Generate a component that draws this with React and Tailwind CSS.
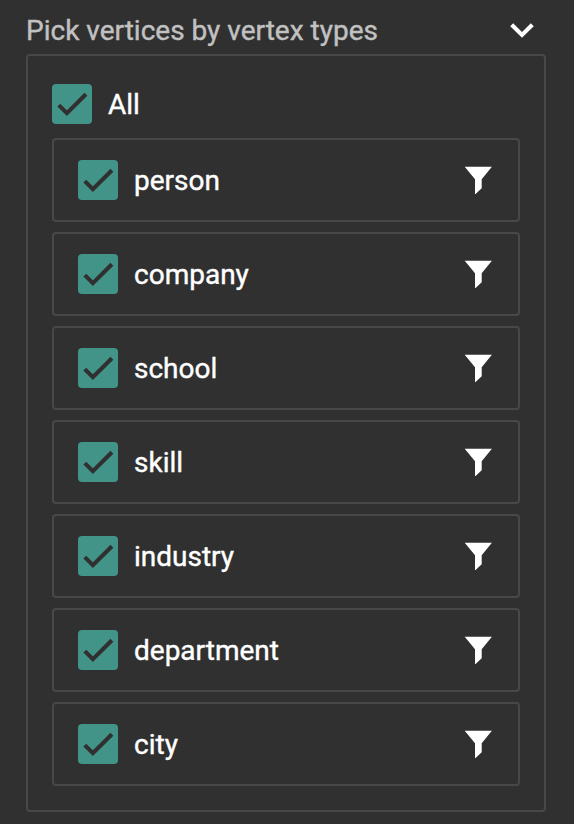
const vertexTypes = ['person', 'company', 'school', 'skill', 'industry', 'department', 'city'];

function Checkbox() {
  return (
    <span className="block size-10 shrink-0 rounded-[4px] bg-[#429488]">
      <svg viewBox="0 0 40 40" className="size-10" fill="none" stroke="#303030" strokeWidth="4.1">
        <path d="M6.8 21.1 14.9 29.1 33.9 10.2" />
      </svg>
    </span>
  );
}

function FunnelIcon() {
  return (
    <svg viewBox="0 0 28 28" className="size-7 shrink-0" fill="#ffffff">
      <path d="M0.7 0.8H27.9L17.7 13.2V22.3L11.6 28H11V13.2Z" />
    </svg>
  );
}

function ChevronIcon() {
  return (
    <svg viewBox="0 0 24 16" className="h-4 w-6 shrink-0" fill="none" stroke="#ffffff" strokeWidth="4.2">
      <path d="M1.7 2.8 12 12.9 22.3 2.8" />
    </svg>
  );
}

function VertexRow({ name }) {
  return (
    <li className="flex h-[84px] items-center rounded-[4px] border-2 border-[#484848] pr-[26px] pl-6">
      <Checkbox />
      <span className="ml-4 flex-1 pt-0.5">{name}</span>
      <FunnelIcon />
    </li>
  );
}

export default function App() {
  return (
    <main className="h-[824px] w-[574px] overflow-hidden bg-[#303030] px-[26px] font-['Roboto',sans-serif] text-[28px] leading-10 text-white [-webkit-text-stroke:0.4px]">
      <header className="flex h-[54px] items-center justify-between pt-[6px] pr-3.5">
        <h1 className="pt-0.5 text-[#c1c1c1]">Pick vertices by vertex types</h1>
        <ChevronIcon />
      </header>
      <section className="h-[758px] w-[520px] rounded-[4px] border-2 border-[#484848] px-6 pt-7">
        <div className="flex h-10 items-center gap-4">
          <Checkbox />
          <span className="pt-0.5">All</span>
        </div>
        <ul className="mt-[14px] flex flex-col gap-[10px]">
          {vertexTypes.map((name) => (
            <VertexRow key={name} name={name} />
          ))}
        </ul>
      </section>
    </main>
  );
}
